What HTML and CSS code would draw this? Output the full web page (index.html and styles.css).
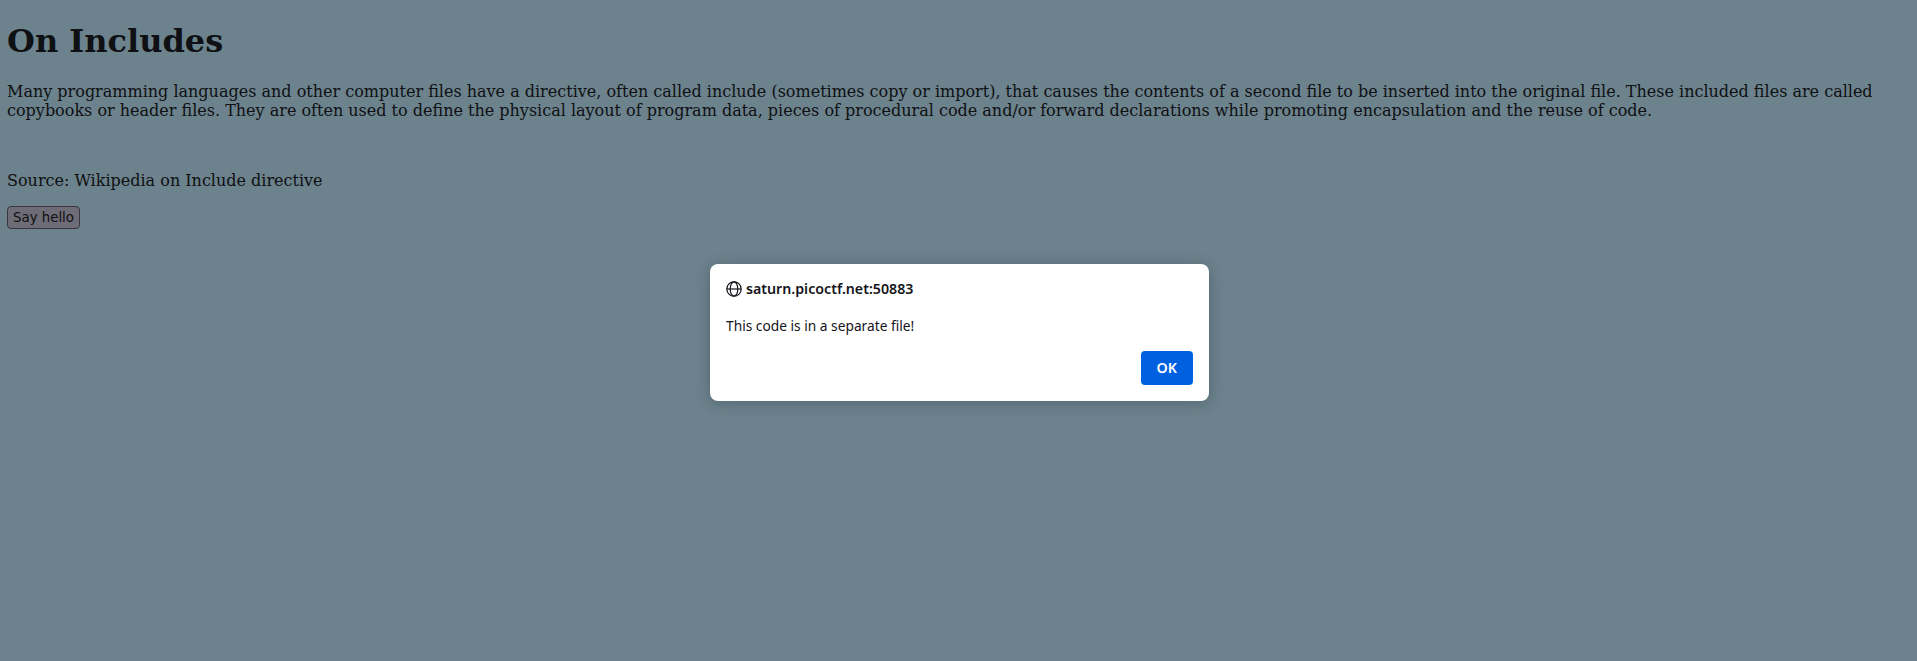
FILE: index.html
```
<!DOCTYPE html>
<html lang="en">
<head>
<meta charset="utf-8">
<title>On Includes</title>
<link rel="stylesheet" href="styles.css">
</head>
<body>
<main class="page">
<h1 class="title">On Includes</h1>
<p class="text">Many programming languages and other computer files have a directive, often called include (sometimes copy or import), that causes the contents of a second file to be inserted into the original file. These included files are called<br>copybooks or header files. They are often used to define the physical layout of program data, pieces of procedural code and/or forward declarations while promoting encapsulation and the reuse of code.</p>
<p class="text source"><br>Source: Wikipedia on Include directive</p>
<button class="hello">Say hello</button>
</main>
<div class="dialog" role="alertdialog">
<div class="origin"><svg class="globe" viewBox="0 0 16 16" fill="none" stroke="#15141a" stroke-width="1.2"><circle cx="8" cy="8" r="7.2"/><ellipse cx="8" cy="8" rx="3.8" ry="7.2"/><path d="M.8 8h14.4"/></svg><span class="host">saturn.picoctf.net:50883</span></div>
<div class="message">This code is in a separate file!</div>
<div class="actions"><button class="ok"><span class="ok-label">OK</span></button></div>
</div>
</body>
</html>
```
FILE: styles.css
```
body { margin: 0; background: #6c828c; color: #0f1013; font: 16px/19px "DejaVu Serif", serif; }
.page { padding: 22px 7px; }
.title { margin: 0 0 22px; font-size: 32px; line-height: 38px; }
.text { margin: 0 0 16px; white-space: nowrap; }
.source { margin-top: 32px; }
.hello { display: block; box-sizing: border-box; width: 73px; height: 23px; padding: 0; border: 1px solid #39343d; border-radius: 4px; background: #6e6c76; color: #0f1013; font: 13.333px "DejaVu Sans", sans-serif; }
.dialog { position: absolute; left: 710px; top: 264px; width: 499px; height: 137px; box-sizing: border-box; padding: 16px; border-radius: 8px; background: #fff; color: #15141a; box-shadow: 0 2px 14px rgba(20, 35, 45, .3); font: 15px/18px "Noto Sans", sans-serif; }
.origin { display: flex; align-items: center; gap: 4px; height: 17px; font-weight: 600; }
.globe { width: 16px; height: 16px; }
.host { padding-bottom: 2px; transform: scaleX(.946); transform-origin: left; }
.message { width: max-content; margin-top: 19px; transform: scaleX(.916); transform-origin: left; }
.actions { display: flex; justify-content: flex-end; margin-top: 17px; }
.ok { width: 52px; height: 34px; padding: 0 0 2px; border: 0; border-radius: 4px; background: #0061e0; color: #fff; font: 600 15px "Noto Sans", sans-serif; }
.ok-label { display: inline-block; transform: scaleX(.95); }
```
